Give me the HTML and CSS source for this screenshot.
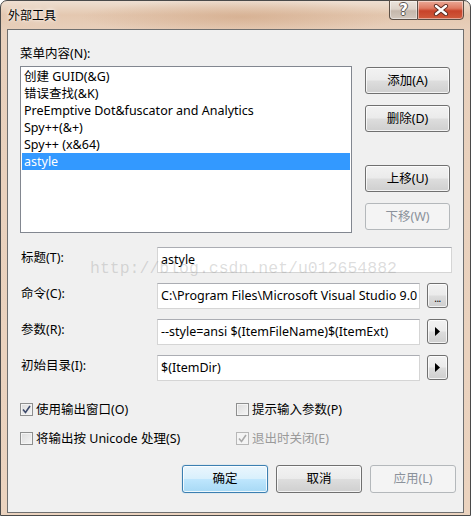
FILE: index.html
```html
<!DOCTYPE html>
<html lang="zh-CN">
<head>
<meta charset="utf-8">
<title>外部工具</title>
<link rel="stylesheet" href="styles.css">
</head>
<body>
<div class="window">
  <div class="titlebar">
    <span class="title">外部工具</span>
    <div class="caption-btns">
      <div class="cap help">?</div>
      <div class="cap close">
        <svg width="16" height="12" viewBox="0 0 16 12">
          <path d="M3 2 L13 10 M13 2 L3 10" stroke="#5a2a20" stroke-width="4.2" stroke-linecap="round"/>
          <path d="M3 2 L13 10 M13 2 L3 10" stroke="#ffffff" stroke-width="2.4" stroke-linecap="round"/>
        </svg>
      </div>
    </div>
  </div>
  <div class="client">
    <div class="section-label">菜单内容(N):</div>
    <div class="list-row">
      <div class="listbox">
        <div class="item">创建 GUID(&amp;G)</div>
        <div class="item">错误查找(&amp;K)</div>
        <div class="item">PreEmptive Dot&amp;fuscator and Analytics</div>
        <div class="item">Spy++(&amp;+)</div>
        <div class="item">Spy++ (x&amp;64)</div>
        <div class="item selected">astyle</div>
      </div>
      <div class="side-btns">
        <button class="btn">添加(A)</button>
        <button class="btn">删除(D)</button>
        <button class="btn gap-top">上移(U)</button>
        <button class="btn" disabled>下移(W)</button>
      </div>
    </div>
    <div class="fields">
      <div class="field-row">
        <div class="field-label">标题(T):</div>
        <div class="input wide">astyle</div>
      </div>
      <div class="field-row">
        <div class="field-label">命令(C):</div>
        <div class="input">C:\Program Files\Microsoft Visual Studio 9.0</div>
        <button class="mini-btn"><span class="dots">...</span></button>
      </div>
      <div class="field-row">
        <div class="field-label">参数(R):</div>
        <div class="input">--style=ansi $(ItemFileName)$(ItemExt)</div>
        <button class="mini-btn"><svg width="5" height="9" viewBox="0 0 5 9"><path d="M0 0 L5 4.5 L0 9 Z" fill="#000"/></svg></button>
      </div>
      <div class="field-row">
        <div class="field-label">初始目录(I):</div>
        <div class="input">$(ItemDir)</div>
        <button class="mini-btn"><svg width="5" height="9" viewBox="0 0 5 9"><path d="M0 0 L5 4.5 L0 9 Z" fill="#000"/></svg></button>
      </div>
    </div>
    <div class="checks">
      <label class="check"><span class="box checked"><svg width="9" height="9" viewBox="0 0 9 9"><path d="M1 4.5 L3.5 7.5 L8 1" fill="none" stroke="#3d4a6b" stroke-width="1.6"/></svg></span>使用输出窗口(O)</label>
      <label class="check"><span class="box"></span>提示输入参数(P)</label>
      <label class="check"><span class="box"></span>将输出按 Unicode 处理(S)</label>
      <label class="check disabled"><span class="box"><svg width="9" height="9" viewBox="0 0 9 9"><path d="M1 4.5 L3.5 7.5 L8 1" fill="none" stroke="#a9a9a9" stroke-width="1.6"/></svg></span>退出时关闭(E)</label>
    </div>
    <div class="footer">
      <button class="btn big default">确定</button>
      <button class="btn big">取消</button>
      <button class="btn big" disabled>应用(L)</button>
    </div>
  </div>
  <div class="watermark">http://blog.csdn.net/u012654882</div>
</div>
</body>
</html>
```

FILE: styles.css
```css
* { box-sizing: border-box; }
html, body { margin: 0; padding: 0; }
body {
  width: 471px;
  height: 516px;
  overflow: hidden;
  background: #ffffff;
  font-family: "Noto Sans", "Noto Sans CJK SC", sans-serif;
  font-size: 12.5px;
  color: #000;
}
.window {
  position: relative;
  width: 471px;
  height: 516px;
  border: 1px solid #4a4a4a;
  border-radius: 7px 7px 0 0;
  background:
    radial-gradient(ellipse 160px 18px at 240px 16px, rgba(205,160,125,0.55), rgba(205,160,125,0) 100%),
    linear-gradient(to bottom, #eedfd2 0px, #e4c8b0 14px, #e8d0bc 30px, #ebd3bf 100%);
  padding: 0 6px 2px 6px;
  display: flex;
  flex-direction: column;
}
.titlebar {
  height: 28px;
  display: flex;
  align-items: flex-start;
  justify-content: space-between;
  flex: none;
}
.title {
  padding-left: 1px;
  margin-top: 6px;
  line-height: 17px;
  font-size: 12px;
  color: #000;
  text-shadow: 0 0 6px rgba(255,255,255,0.95), 0 0 3px rgba(255,255,255,0.9);
}
.caption-btns {
  display: flex;
  margin-top: -1px;
}
.cap {
  height: 20px;
  border: 1px solid #5b4f46;
  display: flex;
  align-items: center;
  justify-content: center;
  box-shadow: inset 0 0 0 1px rgba(255,255,255,0.45);
}
.help {
  width: 28px;
  border-right: none;
  border-radius: 0 0 0 4px;
  background: linear-gradient(to bottom, #ece4dc 0%, #ddd2c8 45%, #c5b8ac 55%, #d2c7bd 100%);
  color: #ffffff;
  font-weight: bold;
  font-size: 15px;
  font-family: "DejaVu Sans", sans-serif;
  text-shadow: -1px 0 #5c5550, 1px 0 #5c5550, 0 -1px #5c5550, 0 1px #5c5550;
  line-height: 18px;
}
.close {
  width: 47px;
  border-radius: 0 0 4px 0;
  background: linear-gradient(to bottom, #eaa997 0%, #de7a62 40%, #c8432a 55%, #d05b3c 100%);
}
.client {
  flex: 1;
  border: 1px solid #6f6f6f;
  background: #f0f0f0;
  padding: 15px 0 0 12px;
  display: flex;
  flex-direction: column;
}
.section-label {
  line-height: 17px;
  height: 17px;
}
.list-row {
  display: flex;
  margin-top: 4px;
}
.listbox {
  width: 332px;
  height: 167px;
  border: 1px solid #828790;
  background: #ffffff;
  padding: 1px;
}
.item {
  height: 17px;
  line-height: 17px;
  padding-left: 2px;
  white-space: nowrap;
}
.item.selected {
  background: #3399ff;
  color: #ffffff;
}
.side-btns {
  margin-left: 13px;
  width: 85px;
  display: flex;
  flex-direction: column;
  padding-top: 1px;
}
.side-btns .btn + .btn { margin-top: 11px; }
.side-btns .btn.gap-top { margin-top: 33px; }
.btn {
  width: 85px;
  height: 27px;
  padding: 0;
  border: 1px solid #707070;
  border-radius: 3px;
  background: linear-gradient(to bottom, #f2f2f2 0%, #ebebeb 48%, #dddddd 52%, #cfcfcf 100%);
  box-shadow: inset 0 0 0 1px rgba(255,255,255,0.75);
  font: inherit;
  color: #000;
  line-height: 25px;
  text-align: center;
}
.btn:disabled {
  border-color: #b4b8bb;
  background: #f4f4f4;
  box-shadow: none;
  color: #8b929b;
}
.btn.default {
  border-color: #3c7fb1;
  background: linear-gradient(to bottom, #eaf6fd 0%, #d9f0fc 48%, #bee6fd 52%, #a7d9f5 100%);
  box-shadow: inset 0 0 0 1px rgba(255,255,255,0.8), 0 0 1px 0 #5fa8d8;
}
.fields {
  margin-top: 14px;
  display: flex;
  flex-direction: column;
  gap: 10px;
  padding-right: 11px;
}
.field-row {
  display: flex;
  align-items: flex-start;
  height: 26px;
}
.field-label {
  width: 137px;
  flex: none;
  line-height: 17px;
  padding-top: 2px;
  padding-left: 1px;
}
.input {
  width: 263px;
  height: 26px;
  border: 1px solid #d5d5d5;
  border-top-color: #abadb3;
  background: #ffffff;
  padding: 0 3px;
  line-height: 24px;
  white-space: nowrap;
  overflow: hidden;
}
.input.wide { width: 295px; }
.mini-btn {
  width: 21px;
  height: 25px;
  margin-left: 7px;
  padding: 0;
  border: 1px solid #707070;
  border-radius: 3px;
  background: linear-gradient(to bottom, #f2f2f2 0%, #ebebeb 48%, #dddddd 52%, #cfcfcf 100%);
  box-shadow: inset 0 0 0 1px rgba(255,255,255,0.75);
  display: flex;
  align-items: center;
  justify-content: center;
}
.dots {
  font-family: "Noto Sans", sans-serif;
  font-size: 10px;
  line-height: 10px;
  margin-top: 4px;
  letter-spacing: -0.5px;
  color: #000;
}
.checks {
  margin-top: 20px;
  display: grid;
  grid-template-columns: 216px 1fr;
  row-gap: 12px;
}
.check {
  display: flex;
  align-items: center;
  height: 17px;
  line-height: 17px;
  white-space: nowrap;
}
.box {
  width: 13px;
  height: 13px;
  flex: none;
  margin-right: 3px;
  border: 1px solid #8e8f8f;
  background: linear-gradient(135deg, #dcdcdc 0%, #f5f5f5 100%);
  box-shadow: inset 0 0 0 1px #f4f4f4;
  display: flex;
  align-items: center;
  justify-content: center;
}
.check.disabled { color: #9a9a9a; }
.check.disabled .box {
  border-color: #b7b7b7;
  background: #f4f4f4;
}
.footer {
  margin-top: 18px;
  display: flex;
  justify-content: flex-end;
  gap: 8px;
  padding-right: 7px;
}
.btn.big {
  width: 86px;
  height: 28px;
  line-height: 26px;
}
.watermark {
  position: absolute;
  left: 89px;
  top: 257px;
  font-family: "Liberation Mono", "DejaVu Sans Mono", monospace;
  font-size: 16.5px;
  line-height: 22px;
  color: rgba(150,150,150,0.33);
  white-space: nowrap;
  pointer-events: none;
}
```
